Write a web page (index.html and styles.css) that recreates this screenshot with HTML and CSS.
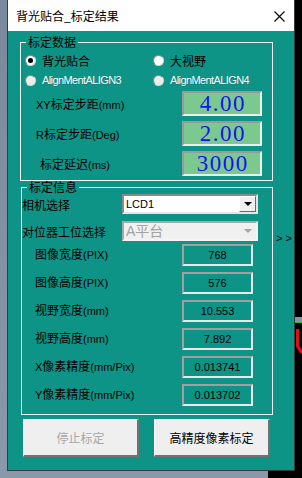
FILE: index.html
```html
<!DOCTYPE html>
<html lang="zh-CN">
<head>
<meta charset="utf-8">
<title>背光贴合_标定结果</title>
<link rel="stylesheet" href="styles.css">
</head>
<body>
<div class="desktop">
  <div class="wallpaper"></div>
  <div class="tray-strip"></div>
  <svg class="red-arrow" viewBox="0 0 7 26" width="7" height="26"><path d="M2.5 0 V17 L7 24" fill="none" stroke="#e01010" stroke-width="3"/></svg>
  <div class="window">
    <div class="titlebar">
      <span class="title">背光贴合_标定结果</span>
      <svg class="close" viewBox="0 0 11 11" width="11" height="11"><path d="M0.5 0.5 L10.5 10.5 M10.5 0.5 L0.5 10.5" stroke="#000" stroke-width="1.1" fill="none"/></svg>
    </div>
    <div class="client">
      <fieldset class="group group-data">
        <legend>标定数据</legend>
        <div class="radio-grid">
          <label class="radio"><span class="dot checked"></span><span>背光贴合</span></label>
          <label class="radio"><span class="dot"></span><span>大视野</span></label>
          <label class="radio disabled"><span class="dot"></span><span class="dis-text">AlignMentALIGN3</span></label>
          <label class="radio disabled"><span class="dot"></span><span class="dis-text">AlignMentALIGN4</span></label>
        </div>
        <div class="param-row"><span class="plabel"><span class="lat">XY</span>标定步距<span class="lat">(mm)</span></span><div class="numbox">4.00</div></div>
        <div class="param-row"><span class="plabel"><span class="lat">R</span>标定步距<span class="lat">(Deg)</span></span><div class="numbox">2.00</div></div>
        <div class="param-row"><span class="plabel indent">标定延迟<span class="lat">(ms)</span></span><div class="numbox">3000</div></div>
      </fieldset>
      <div class="info-row">
        <fieldset class="group group-info">
          <legend>标定信息</legend>
          <div class="combo-row">
            <span class="clabel">相机选择</span>
            <div class="combo"><span class="combo-text">LCD1</span><span class="combo-btn"><i class="tri"></i></span></div>
          </div>
          <div class="combo-row">
            <span class="clabel">对位器工位选择</span>
            <div class="combo disabled"><span class="combo-text">A平台</span><span class="combo-btn"><i class="tri"></i></span></div>
          </div>
          <div class="val-row"><span class="vlabel">图像宽度<span class="lat">(PIX)</span></span><div class="valbox">768</div></div>
          <div class="val-row"><span class="vlabel">图像高度<span class="lat">(PIX)</span></span><div class="valbox">576</div></div>
          <div class="val-row"><span class="vlabel">视野宽度<span class="lat">(mm)</span></span><div class="valbox">10.553</div></div>
          <div class="val-row"><span class="vlabel">视野高度<span class="lat">(mm)</span></span><div class="valbox">7.892</div></div>
          <div class="val-row"><span class="vlabel"><span class="lat">X</span>像素精度<span class="lat">(mm/Pix)</span></span><div class="valbox">0.013741</div></div>
          <div class="val-row"><span class="vlabel"><span class="lat">Y</span>像素精度<span class="lat">(mm/Pix)</span></span><div class="valbox">0.013702</div></div>
        </fieldset>
        <span class="more">&gt; &gt;</span>
      </div>
      <div class="buttons">
        <button class="btn" disabled>停止标定</button>
        <button class="btn">高精度像素标定</button>
      </div>
    </div>
  </div>
</div>
</body>
</html>
```

FILE: styles.css
```css
html, body {
  margin: 0;
  padding: 0;
}
body {
  width: 302px;
  height: 478px;
  overflow: hidden;
  background: #000;
  font-family: "Liberation Sans", "Noto Sans CJK SC", sans-serif;
  font-size: 12px;
  color: #000;
}
.desktop {
  position: relative;
  width: 302px;
  height: 478px;
}
.wallpaper {
  position: absolute;
  left: 0;
  top: 0;
  width: 268px;
  height: 478px;
  background: linear-gradient(#7a899d, #8a98ac);
}
.tray-strip {
  position: absolute;
  left: 295px;
  top: 317px;
  width: 7px;
  height: 5px;
  background: #8494a8;
  border-bottom: 1px solid #22c022;
}
.red-arrow {
  position: absolute;
  left: 295px;
  top: 329px;
}
.window {
  position: absolute;
  left: 7px;
  top: 0;
  width: 288px;
  height: 471px;
  box-sizing: border-box;
  border: 1px solid #3a3a3a;
  border-top: none;
  background: #0e9387;
}
.titlebar {
  height: 31px;
  background: #fff;
  display: flex;
  align-items: center;
  justify-content: space-between;
  padding: 0 9px 0 8px;
}
.title {
  font-family: "Noto Sans CJK SC", sans-serif;
  font-size: 12px;
  line-height: 14px;
}
.close {
  display: block;
  margin-top: 1px;
}
.client {
  height: 439px;
  box-sizing: border-box;
  padding-top: 5px;
}
.group {
  margin: 0;
  box-sizing: border-box;
  border: 1px solid #f4f7f7;
  min-width: 0;
}
.group legend {
  font-family: "Noto Sans CJK SC", sans-serif;
  font-size: 12px;
  line-height: 12px;
  padding: 0 2px;
  margin-left: 1px;
}
.group-data {
  margin-left: 12px;
  width: 253px;
  padding: 2px 0 4px 4px;
}
.radio-grid {
  display: grid;
  grid-template-columns: 128px auto;
  grid-auto-rows: 20px;
  align-items: center;
}
.radio {
  display: flex;
  align-items: center;
  gap: 6px;
  white-space: nowrap;
}
.dot {
  position: relative;
  width: 11px;
  height: 11px;
  box-sizing: border-box;
  border-radius: 50%;
  border: 1px solid #8a8a8a;
  border-right-color: #d8d8d8;
  border-bottom-color: #d8d8d8;
  background: #fff;
  flex: none;
}
.dot.checked::after {
  content: "";
  position: absolute;
  left: 2px;
  top: 2px;
  width: 5px;
  height: 5px;
  border-radius: 50%;
  background: #000;
}
.radio.disabled .dot {
  background: #ececec;
}
.dis-text {
  font-family: "Liberation Sans", sans-serif;
  font-size: 11px;
  letter-spacing: -0.6px;
  color: #fafafa;
  text-shadow: 1px 1px 0 rgba(70, 90, 90, 0.45);
}
.lat {
  font-family: "Liberation Sans", sans-serif;
  font-size: 11px;
}
.param-row {
  display: grid;
  grid-template-columns: 157px 80px;
  align-items: center;
  height: 25px;
  margin-top: 5px;
}
.radio-grid + .param-row {
  margin-top: 1px;
}
.plabel {
  padding-left: 11px;
  white-space: nowrap;
}
.plabel.indent {
  padding-left: 15px;
}
.numbox {
  height: 25px;
  box-sizing: border-box;
  border: 2px solid;
  border-color: #9a9a9a #eeeeee #eeeeee #9a9a9a;
  background: #7bc98f;
  color: #1414ee;
  font-family: "Liberation Serif", serif;
  font-size: 23px;
  line-height: 22px;
  letter-spacing: 1.5px;
  text-indent: 1.5px;
  text-align: center;
}
.info-row {
  display: flex;
  align-items: flex-start;
}
.group-info {
  margin-left: 13px;
  width: 252px;
  padding: 1px 0 8px 0;
}
.group-info legend {
  margin-left: 5px;
}
.more {
  margin-left: 3px;
  margin-top: 51px;
  font-size: 11px;
  line-height: 12px;
  white-space: nowrap;
}
.combo-row {
  display: grid;
  grid-template-columns: 100px 136px;
  align-items: center;
  height: 20px;
}
.combo-row + .combo-row {
  margin-top: 7px;
}
.clabel {
  font-family: "Noto Sans CJK SC", sans-serif;
  white-space: nowrap;
}
.combo {
  height: 20px;
  box-sizing: border-box;
  border: 2px solid;
  border-color: #8a8a8a #e6e6e6 #e6e6e6 #8a8a8a;
  background: #fff;
  display: flex;
  align-items: center;
}
.combo-text {
  flex: 1;
  padding-left: 2px;
  font-size: 11px;
  line-height: 14px;
}
.combo-btn {
  width: 17px;
  height: 16px;
  box-sizing: border-box;
  background: #f0f0f0;
  border: 1px solid;
  border-color: #fff #6a6a6a #6a6a6a #fff;
  display: flex;
  align-items: center;
  justify-content: center;
}
.tri {
  display: block;
  width: 0;
  height: 0;
  border-left: 4px solid transparent;
  border-right: 4px solid transparent;
  border-top: 4px solid #000;
}
.combo.disabled {
  background: #f0f0f0;
  border-color: #a8a8a8 #f4f4f4 #f4f4f4 #a8a8a8;
}
.combo.disabled .combo-text {
  color: #a3a3a3;
  font-size: 14px;
}
.combo.disabled .combo-btn {
  border-color: #f0f0f0;
}
.combo.disabled .tri {
  border-top-color: #a3a3a3;
}
.val-row {
  display: grid;
  grid-template-columns: 160px 71px;
  align-items: center;
  height: 22px;
  margin-top: 6px;
}
.combo-row + .val-row {
  margin-top: 3px;
}
.vlabel {
  padding-left: 13px;
  padding-bottom: 4px;
  white-space: nowrap;
}
.valbox {
  height: 22px;
  box-sizing: border-box;
  border: 2px solid;
  border-color: #a0a0a0 #e8e8e8 #e8e8e8 #a0a0a0;
  font-size: 11px;
  line-height: 18px;
  text-align: center;
}
.buttons {
  display: flex;
  gap: 15px;
  padding-left: 15px;
  margin-top: 4px;
}
.btn {
  width: 116px;
  height: 38px;
  box-sizing: border-box;
  padding: 0;
  background: #efefef;
  border-style: solid;
  border-width: 1px 2px 2px 1px;
  border-color: #fff #707070 #707070 #fff;
  font-family: "Noto Sans CJK SC", sans-serif;
  font-size: 12px;
  color: #000;
}
.btn:disabled {
  color: #a6a6a6;
}
```
